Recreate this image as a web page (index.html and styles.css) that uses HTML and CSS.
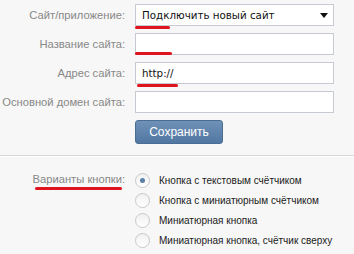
FILE: index.html
```html
<!DOCTYPE html>
<html lang="ru">
<head>
    <meta charset="UTF-8">
    <title>Подключение сайта</title>
    <link rel="stylesheet" href="styles.css">
</head>
<body>

    <div class="form">
        <div class="row">
            <label class="label">Сайт/приложение:</label>
            <div class="field">
                <div class="select">
                    <span>Подключить новый сайт</span>
                    <span class="arrow"></span>
                </div>
                <span class="mark mark-select"></span>
            </div>
        </div>
        <div class="row">
            <label class="label">Название сайта:</label>
            <div class="field">
                <div class="input"></div>
                <span class="mark mark-name"></span>
            </div>
        </div>
        <div class="row">
            <label class="label">Адрес сайта:</label>
            <div class="field">
                <div class="input">http://</div>
                <span class="mark mark-url"></span>
            </div>
        </div>
        <div class="row">
            <label class="label">Основной домен сайта:</label>
            <div class="field">
                <div class="input"></div>
            </div>
        </div>
        <div class="row row-button">
            <span class="label"></span>
            <button class="save">Сохранить</button>
        </div>
    </div>

    <div class="divider"></div>

    <div class="options">
        <div class="label options-label">Варианты кнопки:</div>
        <ul class="radios">
            <li><span class="radio on"></span>Кнопка с текстовым счётчиком</li>
            <li><span class="radio"></span>Кнопка с миниатюрным счётчиком</li>
            <li><span class="radio"></span>Миниатюрная кнопка</li>
            <li><span class="radio"></span>Миниатюрная кнопка, счётчик сверху</li>
        </ul>
    </div>

</body>
</html>
```

FILE: styles.css
```css
body {
    margin: 0;
    background-color: #f7f7f7;
    font-family: 'Liberation Sans', Arial, sans-serif;
    font-size: 12px;
    color: #222;
}
.form {
    padding-top: 4px;
}
.row {
    display: flex;
    align-items: center;
    height: 22px;
    margin-bottom: 7px;
}
.label {
    width: 125px;
    text-align: right;
    color: #888;
    font-size: 11.2px;
    white-space: nowrap;
    flex-shrink: 0;
}
.field {
    position: relative;
    margin-left: 10px;
}
.select, .input {
    box-sizing: border-box;
    width: 199px;
    height: 22px;
    border: 1px solid #c6cbd1;
    background-color: #fff;
    font-family: 'DejaVu Sans', Verdana, sans-serif;
    font-size: 10.3px;
    color: #111;
    padding-left: 6px;
    line-height: 20px;
}
.select {
    display: flex;
    justify-content: space-between;
    align-items: center;
    padding-right: 5px;
}
.arrow {
    width: 0;
    height: 0;
    border-left: 4px solid transparent;
    border-right: 4px solid transparent;
    border-top: 5px solid #111;
}
.mark {
    position: absolute;
    height: 3px;
    border-radius: 2px;
    background-color: #e0141e;
}
.mark-select {
    left: 0;
    top: 22px;
    width: 35px;
}
.mark-name {
    left: 0;
    top: 19px;
    width: 37px;
}
.mark-url {
    left: 2px;
    top: 22px;
    width: 41px;
}
.row-button {
    height: 24px;
    margin: 2px 0 11px;
}
.save {
    margin-left: 10px;
    width: 88px;
    height: 24px;
    border: 1px solid #4a6d94;
    border-radius: 3px;
    background: linear-gradient(#6f91b8, #5177a2);
    color: #fff;
    font-family: 'Liberation Sans', Arial, sans-serif;
    font-size: 12px;
}
.divider {
    border-top: 1px solid #d6d6d6;
    border-bottom: 1px solid #fff;
}
.options {
    display: flex;
    padding-top: 13px;
}
.options-label {
    position: relative;
    line-height: 14px;
    padding-top: 2px;
}
.options-label::after {
    content: '';
    position: absolute;
    left: 35px;
    right: 3px;
    top: 17px;
    height: 3px;
    border-radius: 2px;
    background-color: #e0141e;
}
.radios {
    list-style: none;
    margin: 0 0 0 10px;
    padding: 0;
    font-size: 10px;
    color: #1a1a1a;
}
.radios li {
    display: flex;
    align-items: center;
    height: 20px;
}
.radio {
    box-sizing: border-box;
    width: 15px;
    height: 15px;
    margin-right: 9px;
    border: 1px solid #c8c8c8;
    border-radius: 50%;
    background: linear-gradient(#f0f0f0, #fff);
    display: flex;
    align-items: center;
    justify-content: center;
}
.radio.on::before {
    content: '';
    width: 5px;
    height: 5px;
    border-radius: 50%;
    background-color: #5a7fa8;
}
```
